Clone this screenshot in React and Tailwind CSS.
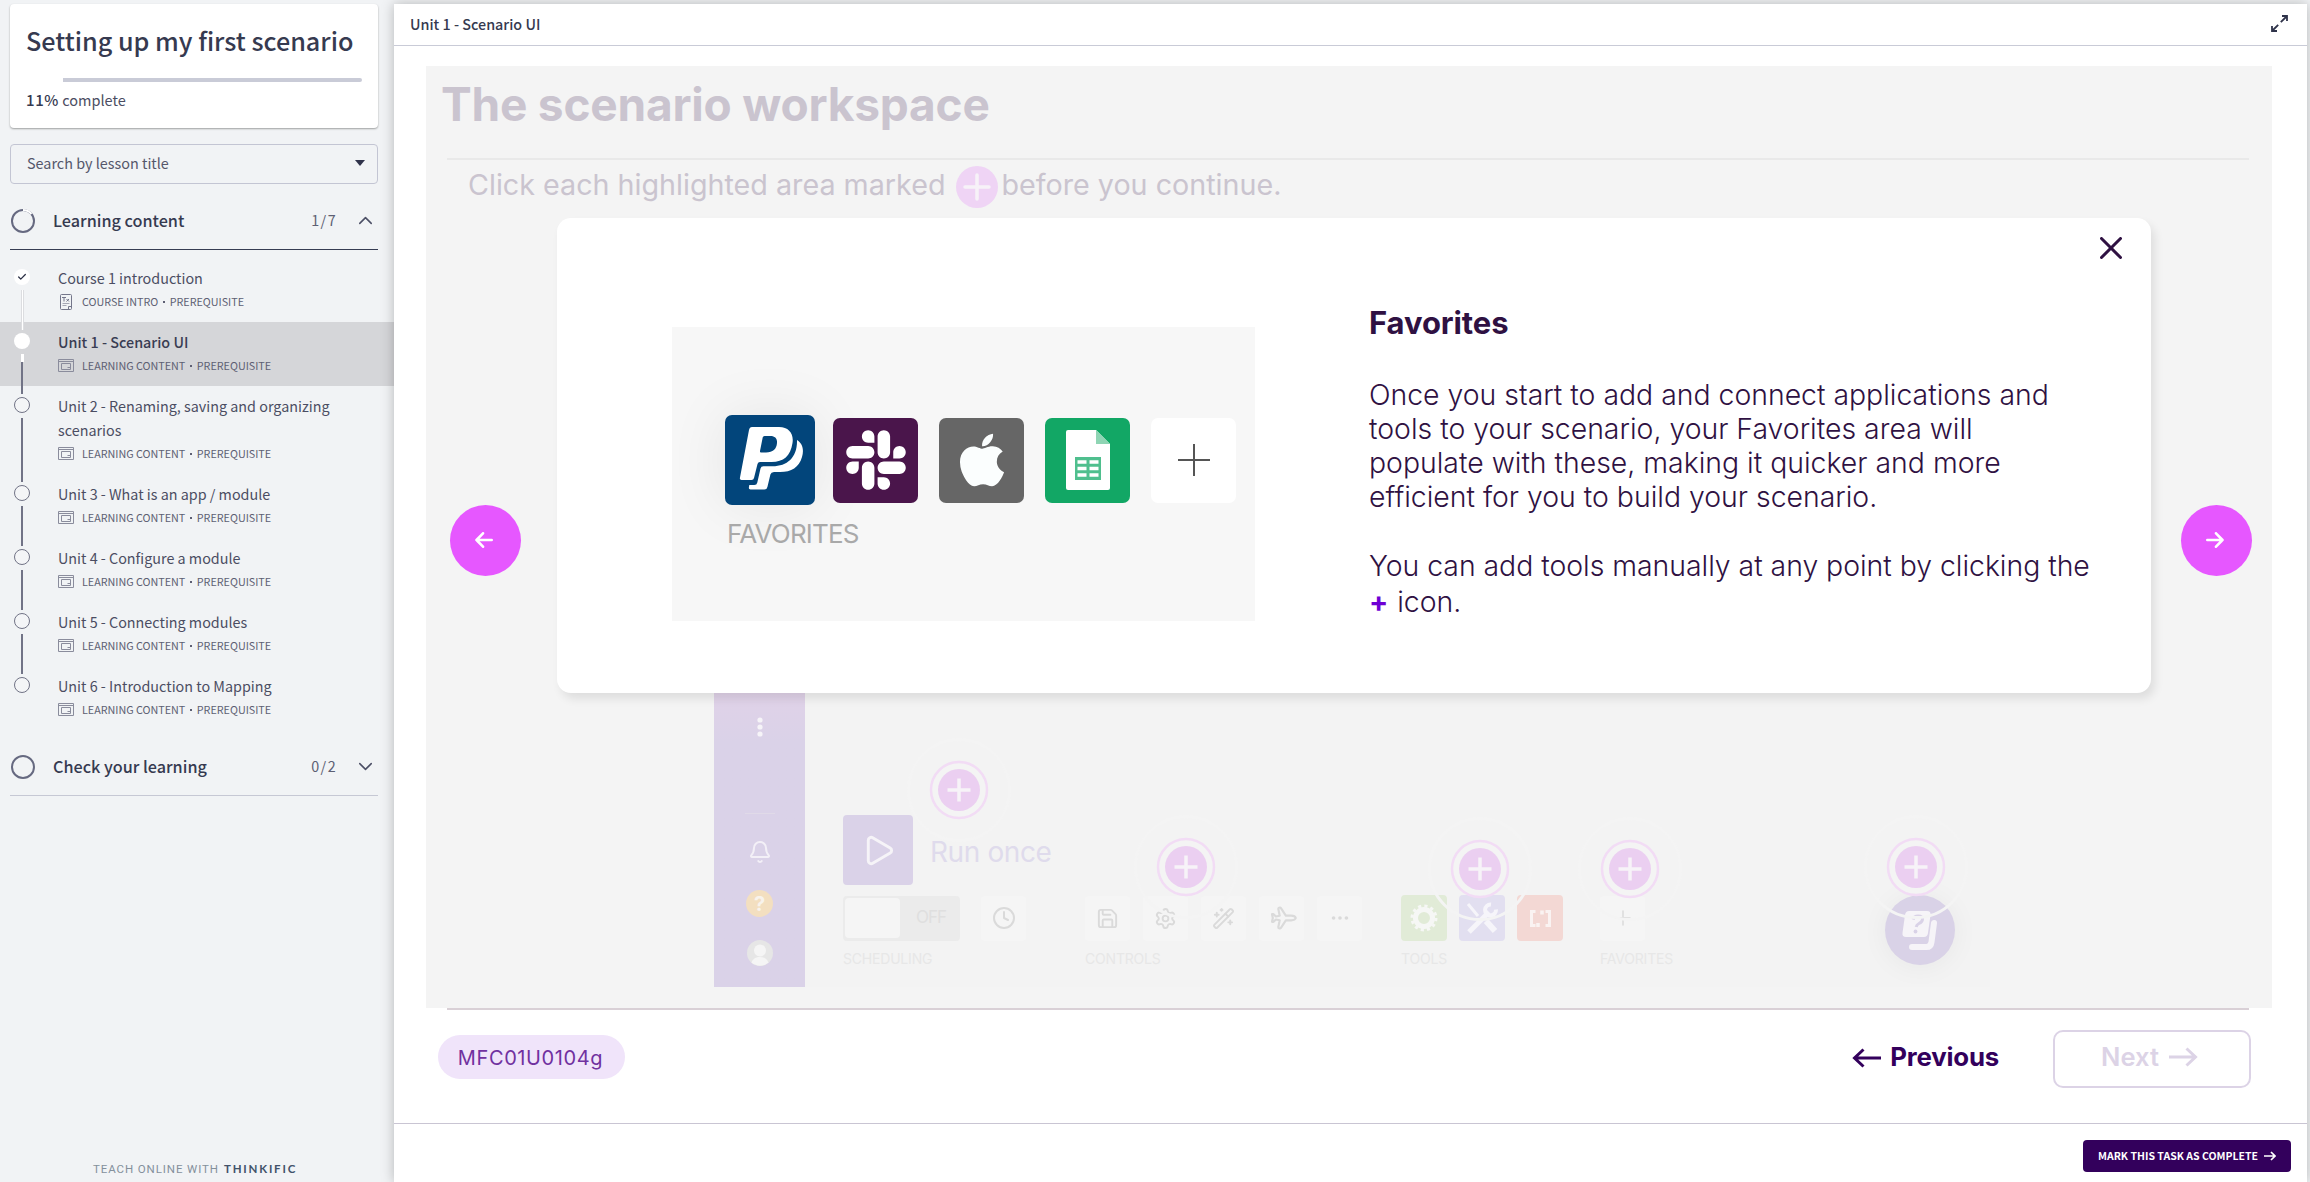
import React from "react";
import { FaSlack, FaApple } from "react-icons/fa";
import { Bell, ChevronDown, ChevronUp, Check, Clock, Ellipsis, Plane, Save, Settings, WandSparkles, Plus, Play } from "lucide-react";

const SANS = "font-['Noto_Sans_CJK_SC',sans-serif]";
const INTER = "font-[Inter,sans-serif]";

const lessons = [
  { title: "Course 1 introduction", kind: "COURSE INTRO", state: "done", doc: true },
  { title: "Unit 1 - Scenario UI", kind: "LEARNING CONTENT", state: "active" },
  { title: "Unit 2 - Renaming, saving and organizing scenarios", kind: "LEARNING CONTENT" },
  { title: "Unit 3 - What is an app / module", kind: "LEARNING CONTENT" },
  { title: "Unit 4 - Configure a module", kind: "LEARNING CONTENT" },
  { title: "Unit 5 - Connecting modules", kind: "LEARNING CONTENT" },
  { title: "Unit 6 - Introduction to Mapping", kind: "LEARNING CONTENT", last: true },
];

function DocIcon() {
  return (
    <svg width="16" height="16" viewBox="0 0 16 16" fill="none" stroke="#74768a" strokeWidth="1">
      <path d="M2.500 1.500a1 1 0 0 1 1-1h9a1 1 0 0 1 1 1v13a1 1 0 0 1-1 1h-9a1 1 0 0 1-1-1z" />
      <path d="M13 12.500h-2.500v3M4 3.500h4M6 3.500v4M8.500 5l2.500 2.500M11 5L8.500 7.500" />
      <path d="M4.500 9.500h7M4.500 11.500h4" opacity=".6" />
    </svg>
  );
}

function MediaIcon() {
  return (
    <svg width="16" height="14" viewBox="0 0 16 14" fill="none" stroke="#8a8c9c" strokeWidth="1">
      <path d="M.5.5h15v12H.5zM.5 2.500h15" />
      <path d="M3.500 4.500h9v6h-9zM9.500 8.500h3" />
    </svg>
  );
}

function Marker({ state }) {
  if (state === "done")
    return (
      <span className="flex size-4 items-center justify-center rounded-full bg-white">
        <Check size={10} strokeWidth={3} color="#2a2f45" />
      </span>
    );
  if (state === "active") return <span className="size-4 rounded-full bg-white" />;
  return <span className="size-4 rounded-full border border-[#717386] bg-[#f4f5f7]" />;
}

function Lesson({ item }) {
  const active = item.state === "active";
  return (
    <li className={active ? "flex bg-[#d5d6d9] pl-[14px]" : "flex pl-[14px]"}>
      <div className="flex w-4 flex-col items-center pt-[11px]">
        <Marker state={item.state} />
        {!item.last && (
          <div className="-mb-2 mt-[5px] flex w-[3px] flex-1 flex-col">
            {item.state === "done" && <span className="flex-1 border-x border-[#dcdde0] bg-white" />}
            {active && <span className="h-2 bg-white" />}
            {item.state !== "done" && <span className="w-[2px] flex-1 bg-[#717386]" />}
          </div>
        )}
      </div>
      <div className="ml-7 w-[310px] pt-2 pb-3">
        <div className={active ? "text-[14.35px] leading-6 font-medium text-[#3a3d53]" : "max-w-[290px] text-[14.35px] leading-6 text-[#4b4d62]"}>
          {item.title}
        </div>
        <div className="mt-1 flex h-4 items-center text-[10.75px] leading-4 text-[#5d5f73]">
          <span className="flex w-6 items-center">{item.doc ? <DocIcon /> : <MediaIcon />}</span>
          <span>{item.kind}</span>
          <span className="mx-[5px] size-[1.500px] bg-[#5d5f73]" />
          <span>PREREQUISITE</span>
        </div>
      </div>
    </li>
  );
}

function Section({ title, count, open }) {
  return (
    <div className={open ? "mx-[10px] mt-[11px] flex h-[55px] w-[368px] items-center border-b border-[#363c52] pb-[3px]" : "mx-[10px] mt-[11px] flex h-[55px] w-[368px] items-center border-b border-[#c6c8d4] pb-[3px]"}>
      <svg width="26" height="26" viewBox="0 0 26 26" fill="none" strokeWidth="2" stroke="#666980">
        <circle cx="13" cy="13" r="11" />
        {open && <path d="M13 2a11 11 0 0 1 8.500 4" stroke="#fff" />}
      </svg>
      <span className="-mt-px ml-[17px] flex-1 text-[16.2px] leading-6 font-medium text-[#363a50]">{title}</span>
      <span className="-mt-px text-[14.35px] leading-6 tracking-[1.4px] text-[#5d5f73]">{count}</span>
      <span className="mr-[5px] ml-5 flex w-4 justify-center">{open ? <ChevronUp size={23} strokeWidth={1.600} color="#4c4f66" className="shrink-0" /> : <ChevronDown size={23} strokeWidth={1.600} color="#4c4f66" className="shrink-0" />}</span>
    </div>
  );
}

function Sidebar() {
  return (
    <aside className={"flex w-[394px] shrink-0 flex-col pt-1 " + SANS}>
      <div className="mx-[10px] flex h-[124px] w-[368px] flex-col rounded bg-white px-4 pt-5 shadow-[0_1px_2px_rgba(0,0,0,0.35)]">
        <h1 className="text-[25.2px] leading-8 font-medium whitespace-nowrap text-[#363a50]">Setting up my first scenario</h1>
        <div className="mt-[22px] ml-[37px] h-1 w-[299px] rounded-r-full bg-[#c9cbd7]" />
        <div className="mt-2 text-[14.5px] leading-5 text-[#4b4d62]">
          <span className="text-[15px] font-medium tracking-[0.6px] text-[#363a50]">11%</span> complete
        </div>
      </div>
      <div className="mx-[10px] mt-4 flex h-10 w-[368px] items-center justify-between rounded border border-[#c3c5d3] pr-[12px] pb-[2px] pl-4 text-[14.4px] text-[#55576b]">
        <span className="leading-6">Search by lesson title</span>
        <svg width="10" height="6" viewBox="0 0 10 6"><path d="M0 0h10L5 6z" fill="#2f334a" /></svg>
      </div>
      <Section title="Learning content" count="1/7" open />
      <ul className="mt-2">{lessons.map((l) => <Lesson key={l.title} item={l} />)}</ul>
      <Section title="Check your learning" count="0/2" />
      <div className="mt-auto mb-[4px] flex items-center pl-[93px] font-[Roboto,sans-serif] text-[11.5px] leading-[18px] text-[#84909c]">
        <span className="w-[131px] tracking-[0.9px] whitespace-nowrap">TEACH ONLINE WITH</span>
        <span className="font-[Lato,sans-serif] text-[11.5px] font-bold tracking-[1.8px] text-[#42526a]">THINKIFIC</span>
      </div>
    </aside>
  );
}

/* Pulsing marker over a clickable area of the workspace */
function Hotspot({ className }) {
  return (
    <svg width="108" height="108" viewBox="-54 -54 108 108" className={"absolute " + className} fill="none">
      <circle r="50.500" stroke="#f4f4f4" strokeWidth="3" />
      <circle r="28" fill="#f4f4f4" stroke="#f2dcf5" strokeWidth="2.500" />
      <circle r="21" fill="#ebcff1" />
      <path d="M-11.500 0h23M0-11.500v23" stroke="#f7f3f8" strokeWidth="3.500" />
    </svg>
  );
}

function Tile({ children }) {
  return <span className="flex h-[45px] w-[45px] items-center justify-center rounded bg-[#f5f5f5] text-[#dadada]">{children}</span>;
}

function Group({ label, className, children }) {
  return (
    <div className={"flex flex-col " + className}>
      <div className="flex h-[46px] items-center">{children}</div>
      <span className="mt-[10px] text-[14px] leading-4 tracking-[-0.2px] text-[#e7e7e7]">{label}</span>
    </div>
  );
}

function Rail() {
  return (
    <div className="flex w-[91px] flex-col items-center justify-end bg-linear-to-b from-[#e0d2e8] from-10% to-[#dad2e8] to-25% pb-[21px]">
      <svg width="8" height="20" viewBox="0 0 8 20" fill="#f6f4f8"><circle cx="4" cy="3" r="2.600" /><circle cx="4" cy="10" r="2.600" /><circle cx="4" cy="17" r="2.600" /></svg>
      <div className="mt-[76px] h-px w-[30px] bg-[#e0dae8]" />
      <Bell size={24} strokeWidth={2} color="#f3f0f7" className="mt-[26px]" />
      <span className="mt-[26px] flex size-[27px] items-center justify-center rounded-full bg-[#f3dfc0] text-[20px] leading-none font-bold text-[#f8f3ec]">?</span>
      <svg width="26" height="26" viewBox="0 0 26 26" className="mt-[23px]">
        <circle cx="13" cy="13" r="13" fill="#e6e6e6" />
        <circle cx="13" cy="10.500" r="6" fill="#f5f5f5" />
        <path d="M4.500 22.500C6 18.500 9 17 13 17s7 1.500 8.500 5.500a13 13 0 0 1-17 0z" fill="#f5f5f5" />
      </svg>
    </div>
  );
}

function Workspace() {
  return (
    <div className="relative mt-[452px] ml-[288px] flex h-[327px] w-[1276px] bg-[#f3f3f3]">
      <Rail />
      <div className="flex flex-1 flex-col justify-end pb-5 pl-[38px]">
        <div className="flex items-center">
          <span className="flex size-[70px] items-center justify-center rounded bg-[#dad2e8]">
            <Play size={35} strokeWidth={2} color="#f6f4f8" />
          </span>
          <span className="ml-[17px] pt-1 text-[28px] leading-9 tracking-[-0.4px] text-[#dfdbec]">Run once</span>
        </div>
        <div className="mt-[10px] flex">
          <Group label="SCHEDULING" className="w-[242px]">
            <span className="flex h-[45px] w-[117px] items-center rounded bg-[#ebebeb] p-[2px]">
              <span className="h-10 w-[55px] rounded-sm bg-[#f5f5f5]" />
              <span className="ml-4 text-[17px] tracking-[-1px] text-[#dfdfdf]">OFF</span>
            </span>
            <span className="ml-[21px]"><Tile><Clock size={24} strokeWidth={2} /></Tile></span>
          </Group>
          <Group label="CONTROLS" className="w-[316px]">
            <div className="flex gap-[13px]">
              <Tile><Save size={23} strokeWidth={2} /></Tile>
              <Tile><Settings size={23} strokeWidth={2} /></Tile>
              <Tile><WandSparkles size={23} strokeWidth={2} /></Tile>
              <Tile><Plane size={26} strokeWidth={2} className="rotate-45" /></Tile>
              <Tile><Ellipsis size={22} strokeWidth={2} /></Tile>
            </div>
          </Group>
          <Group label="TOOLS" className="w-[199px]">
            <div className="flex gap-3">
              <span className="flex size-[46px] items-center justify-center rounded bg-[#e1ebd7]">
                <svg width="30" height="30" viewBox="-15 -15 30 30" fill="none" stroke="#f6f7f5">
                  <circle r="8.500" strokeWidth="5" />
                  <circle r="12" strokeWidth="3" strokeDasharray="3.140 3.140" />
                </svg>
              </span>
              <span className="flex size-[46px] items-center justify-center rounded bg-[#e2dff0]">
                <svg width="34" height="34" viewBox="0 0 34 34" fill="none" stroke="#f6f5fa">
                  <path d="M3 3l10 12" strokeWidth="3" />
                  <path d="M21 20l9 10" strokeWidth="6" />
                  <path d="M4 31L24 11" strokeWidth="5" />
                  <path d="M26 3.500a5.500 5.500 0 1 0 5 5" strokeWidth="4" />
                </svg>
              </span>
              <span className="flex size-[46px] items-center justify-center rounded bg-[#f3d8d4]">
                <svg width="21" height="17" viewBox="0 0 21 17" fill="none" stroke="#faf3f2" strokeWidth="3">
                  <path d="M5.500 1.500h-4v14h4M15.500 15.500h4v-14h-4" />
                  <path d="M12 .5v4M8 13v4" strokeWidth="3.500" />
                </svg>
              </span>
            </div>
          </Group>
          <Group label="FAVORITES" className="w-[80px]">
            <Tile><Plus size={24} strokeWidth={1.500} /></Tile>
          </Group>
        </div>
      </div>
      <span className="absolute right-[35px] bottom-[22px] flex size-[70px] items-center justify-center rounded-full bg-[#d9d2e7] shadow-[0_2px_28px_rgba(0,0,0,0.05)]">
        <svg width="36" height="44" viewBox="0 0 36 44" fill="none">
          <path d="M32 15l-2.500 19q-.6 5-5 5H10" stroke="#f6f4f8" strokeWidth="6" strokeLinecap="round" strokeLinejoin="round" />
          <path d="M7 3h18q4 0 3.500 4l-2.500 18q-.6 4-4 4H4q-4 0-3.500-4L3 7q.6-4 4-4z" fill="#f6f4f8" />
          <path d="M11 11.500q1-3.500 5-3.500 5 0 4.500 3.500-.4 2.500-3.500 4-2.500 1.200-2.800 3.500" stroke="#d9d2e7" strokeWidth="3" />
          <circle cx="13.500" cy="23.500" r="1.900" fill="#d9d2e7" />
        </svg>
      </span>
      <Hotspot className="top-[76px] left-[191px]" />
      <Hotspot className="top-[153px] left-[418px]" />
      <Hotspot className="top-[155px] left-[712px]" />
      <Hotspot className="top-[155px] left-[862px]" />
      <Hotspot className="top-[153px] left-[1148px]" />
    </div>
  );
}

function PaypalMark() {
  return (
    <svg width="90" height="90" viewBox="0 0 90 90" fill="#fff">
      <path fillRule="evenodd" d="M27 12h27c10 0 15 7 13.500 16-2 13-9 19-21 19H35q-2 0-2.500 2L29 63q-.4 2-2.500 2H16.500q-2 0-1.600-2L24 15q.6-3 3-3zM39.500 21q-1.500 0-1.800 1.500L35 36q-.2 1.500 1 1.500h5c7 0 10.500-3.500 11-9.500.4-4.500-2-7-6.500-7z" />
      <path d="M72 25c6 4 7 10 5 17-3 10.500-10.500 15-22 15h-6q-3 0-3.600 2.500l-3 12.500q-.5 2.500-3 2.500H25.500q-2 0-1.600-2l.4-2.500h5q2.500 0 3-2.500l3.200-14q.5-2.300 3-2.300h9c15 0 25-9 24.500-26.200z" />
    </svg>
  );
}

function FavoritesPreview() {
  return (
    <div className="mt-[109px] ml-[115px] flex h-[294px] w-[583px] shrink-0 flex-col bg-[#f7f7f7] pt-[88px] pl-[53px]">
      <div className="flex items-center">
        <span className="flex size-[90px] items-center justify-center rounded-[7px] bg-[#02457b] shadow-[0_0_60px_rgba(0,0,0,0.08)]">
          <PaypalMark />
        </span>
        <span className="ml-[18px] flex size-[85px] items-center justify-center rounded-[7px] bg-[#4a154b]"><FaSlack size={68} color="#fff" /></span>
        <span className="ml-[21px] flex size-[85px] items-center justify-center rounded-[7px] bg-[#666]"><FaApple size={60} color="#fbfefe" /></span>
        <span className="ml-[21px] flex size-[85px] items-center justify-center rounded-[7px] bg-[#12a765]">
          <svg width="44" height="60" viewBox="0 0 44 60">
            <path d="M2 0h28l14 14v44a2 2 0 0 1-2 2H2a2 2 0 0 1-2-2V2a2 2 0 0 1 2-2z" fill="#fff" />
            <path d="M30 0v14h14z" fill="#8fd5b4" />
            <rect x="9" y="27" width="26" height="23" fill="#4fbf8e" />
            <path d="M11.500 30.300h9v3.500h-9zM23.500 30.300h9v3.500h-9zM11.500 36.800h9v3.500h-9zM23.500 36.800h9v3.500h-9zM11.500 43.300h9v3.500h-9zM23.500 43.300h9v3.500h-9z" fill="#fff" />
          </svg>
        </span>
        <span className="ml-[21px] flex size-[85px] items-center justify-center rounded-[7px] bg-white">
          <svg width="32" height="32" viewBox="0 0 32 32"><path d="M0 16h32M16 0v32" stroke="#555" strokeWidth="2" /></svg>
        </span>
      </div>
      <span className="mt-[13px] ml-[2px] text-[26px] leading-8 tracking-[-0.8px] text-[#a9a9a9]">FAVORITES</span>
    </div>
  );
}

function Modal() {
  return (
    <div className="absolute top-[152px] left-[131px] flex h-[475px] w-[1594px] rounded-[14px] bg-white text-[#2f1142] shadow-[4px_6px_10px_rgba(0,0,0,0.09)]">
      <FavoritesPreview />
      <div className="ml-[114px] w-[740px] pt-[85px]">
        <h3 className="text-[31px] leading-10 font-bold tracking-[-0.1px]">Favorites</h3>
        <p className="mt-[35px] text-[28.4px] leading-[34px] font-light whitespace-nowrap">
          Once you start to add and connect applications and<br />
          tools to your scenario, your Favorites area will<br />
          populate with these, making it quicker and more<br />
          efficient for you to build your scenario.
        </p>
        <p className="mt-[34px] text-[28.4px] leading-9 font-light tracking-[-0.02px] whitespace-nowrap">
          You can add tools manually at any point by clicking the<br />
          <span className="mr-px font-bold text-[#6e00d4]">+</span> icon.
        </p>
      </div>
      <svg width="22" height="22" viewBox="0 0 22 22" fill="none" className="absolute top-[19px] right-[29px]">
        <path d="M1.500 1.500l19 19M20.500 1.500l-19 19" stroke="#2f1142" strokeWidth="3" strokeLinecap="round" />
      </svg>
    </div>
  );
}

function RoundArrow({ className, right }) {
  return (
    <button className={"absolute top-[439px] flex size-[71px] items-center justify-center rounded-full bg-[#e657ff] pr-[3px] pb-px " + className}>
      <svg width="18" height="16" viewBox="0 0 18 16" fill="none" stroke="#fff" strokeWidth="2.600" strokeLinecap="round" strokeLinejoin="round">
        {right ? <path d="M1.300 8h15.200M10 1.300L16.500 8 10 14.700" /> : <path d="M16.700 8H1.500M8 1.300L1.500 8 8 14.700" />}
      </svg>
    </button>
  );
}

function LongArrow({ className, color }) {
  return (
    <svg width="29" height="20" viewBox="0 0 29 20" fill="none" stroke={color} strokeWidth="3" className={className}>
      <path d="M0 10h27M17.500 1.500L26.500 10l-9 8.500" />
    </svg>
  );
}

export default function App() {
  return (
    <div className="flex h-[1182px] w-[2310px] overflow-hidden bg-[#f1f3f5]">
      <Sidebar />
      <main className={"relative mt-1 flex w-[1913px] shrink-0 flex-col bg-white shadow-[0_0_12px_rgba(0,0,0,0.25)] " + INTER}>
        <header className={"flex h-[42px] items-center justify-between border-b border-[#c9cbd7] pr-[19px] pl-4 text-[14.35px] font-medium text-[#363a50] " + SANS}>
          <span className="-mt-px leading-6">Unit 1 - Scenario UI</span>
          <svg width="17" height="17" viewBox="0 0 17 17" fill="none" stroke="#2f334a" strokeWidth="1.800" className="-mt-[2px]">
            <path d="M9.800 7.200L15.500 1.500M11 1h5v5M7.200 9.800L1.500 15.500M1 11v5h5" />
          </svg>
        </header>

        <div className="flex h-[1077px] flex-col pt-5">
          <section className="relative ml-8 h-[942px] w-[1846px] bg-[#f4f4f4]">
            <h2 className="pt-2 pl-[15px] text-[46px] leading-[60px] font-bold tracking-[-0.2px] text-[#cac4cf]">The scenario workspace</h2>
            <div className="mt-6 ml-[21px] h-[2px] w-[1802px] bg-[#e9e9e9]" />
            <div className="mt-[6px] ml-[42px] flex h-[42px] items-center text-[28.7px] text-[#cac4cf]">
              <span className="pb-1">Click each highlighted area marked</span>
              <svg width="42" height="42" viewBox="-21 -21 42 42" className="mr-[3px] ml-[11px]"><circle r="21" fill="#efd4f5" /><path d="M-12 0h24M0-12v24" stroke="#f7f2f8" strokeWidth="3.500" strokeLinecap="round" /></svg>
              <span className="pb-1">before you continue.</span>
            </div>
            <Workspace />
            <Modal />
            <RoundArrow className="left-[24px]" />
            <RoundArrow className="left-[1755px]" right />
          </section>
          <div className="ml-[53px] h-[2px] w-[1802px] bg-[#d9d0d6]" />
          <div className="flex h-[97px] items-center pr-[56px] pl-[44px]">
            <span className="-mt-[3px] flex h-11 w-[187px] items-center justify-center rounded-full bg-[#f0e4fa] pt-[2px] pr-[2px] text-[20px] tracking-[0.6px] text-[#7131a0]">MFC01U0104g</span>
            <button className="-mt-[2px] ml-auto flex items-center text-[25.8px] font-bold tracking-[-0.2px] text-[#33005c]">
              <LongArrow color="#33005c" className="mr-[9px] rotate-180" />
              Previous
            </button>
            <button className="ml-[54px] flex h-[58px] w-[198px] items-center justify-center rounded-[10px] border-2 border-[#dcd3e6] pr-[5px] pb-[3px] text-[25.5px] font-semibold text-[#dcd3e6]">
              Next
              <LongArrow color="#dcd3e6" className="ml-[10px]" />
            </button>
          </div>
        </div>

        <footer className={"flex flex-1 items-start justify-end border-t border-[#c9c5d3] pt-4 pr-4 " + SANS}>
          <button className="flex h-8 w-[208px] items-center justify-center rounded bg-[#33005c] text-[10.5px] font-bold whitespace-nowrap text-white">
            <span className="leading-4">MARK THIS TASK AS COMPLETE</span>
            <svg width="12" height="10" viewBox="0 0 12 10" fill="none" stroke="#fff" strokeWidth="1.700" className="ml-[6px]"><path d="M0 5h11M7 1l4 4-4 4" /></svg>
          </button>
        </footer>
      </main>
    </div>
  );
}
